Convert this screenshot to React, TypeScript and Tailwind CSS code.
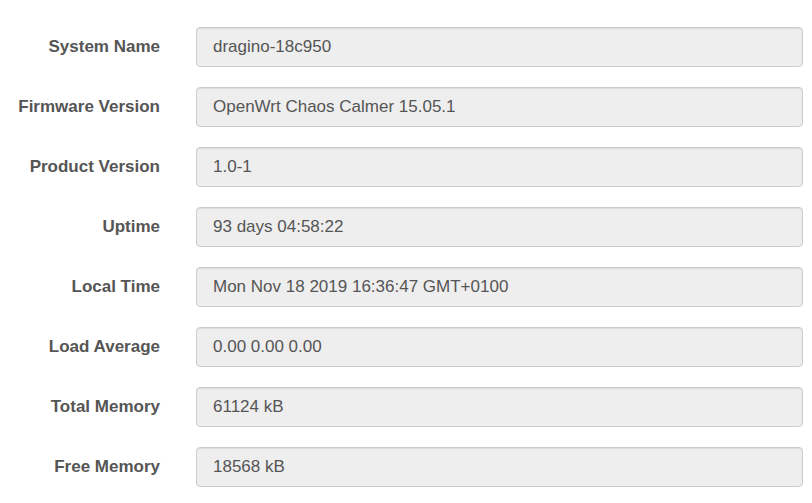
const rows: [string, string][] = [
  ["System Name", "dragino-18c950"],
  ["Firmware Version", "OpenWrt Chaos Calmer 15.05.1"],
  ["Product Version", "1.0-1"],
  ["Uptime", "93 days 04:58:22"],
  ["Local Time", "Mon Nov 18 2019 16:36:47 GMT+0100"],
  ["Load Average", "0.00 0.00 0.00"],
  ["Total Memory", "61124 kB"],
  ["Free Memory", "18568 kB"],
];

export default function App() {
  return (
    <div
      className="w-[812px] h-[503px] bg-white pt-[27px] text-[#555]"
      style={{ fontFamily: '"Liberation Sans", Arial, sans-serif' }}
    >
      {rows.map(([label, value]) => (
        <div key={label} className="flex items-center mb-[20px]">
          <div className="w-[160px] text-right text-[17px] font-bold">{label}</div>
          <div className="ml-[36px] w-[607px] h-[40px] flex items-center pl-[16px] bg-[#eee] border border-[#ccc] rounded-[4px] text-[17px] shadow-[inset_0_1px_1px_rgba(0,0,0,0.075)]">
            {value}
          </div>
        </div>
      ))}
    </div>
  );
}
